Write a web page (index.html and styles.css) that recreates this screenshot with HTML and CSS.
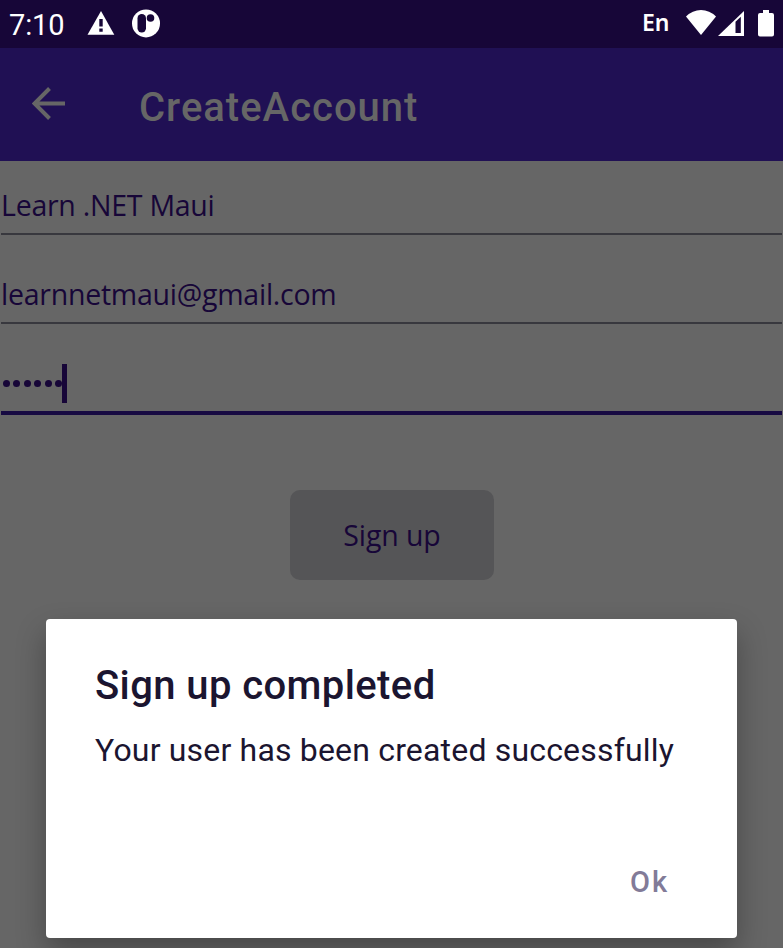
FILE: index.html
```html
<!DOCTYPE html>
<html lang="en">
<head>
<meta charset="utf-8">
<title>CreateAccount</title>
<link rel="stylesheet" href="styles.css">
</head>
<body>
<div class="screen">
  <div class="status">
    <span class="clock">7:10</span>
    <svg class="warn" width="28" height="24" viewBox="0 0 28 24"><path fill="#fff" d="M14 0 27.3 23.7H.5z"/><path fill="#170638" d="M12.3 8h3.4v7.4h-3.4zM12.3 17.6h3.4v3.2h-3.4z"/></svg>
    <svg class="app" width="28" height="29" viewBox="0 0 28 29"><circle cx="14" cy="14.4" r="14" fill="#fff"/><rect x="5.500" y="5" width="8.500" height="18.500" rx="4.200" fill="#170638"/><circle cx="18.500" cy="9" r="3.800" fill="#170638"/></svg>
    <span class="lang">En</span>
    <svg class="wifi" width="30" height="25" viewBox="0 0 30 25"><path fill="#fff" d="M15 25 0 6.500Q6.500 0 15 0t15 6.500z"/></svg>
    <svg class="signal" width="26" height="25" viewBox="0 0 26 25"><path fill="#fff" d="M26 0v25H0z"/><path fill="#170638" d="M17.500 10.800 22.800 5.700V22h-5.300z"/></svg>
    <svg class="battery" width="16" height="27" viewBox="0 0 16 27"><path fill="#fff" d="M5 0h6v3h3q2 0 2 2v19.500q0 2-2 2H2q-2 0-2-2V5q0-2 2-2h3z"/></svg>
  </div>
  <header class="bar">
    <svg width="34" height="33" viewBox="0 0 34 33"><path fill="none" stroke="#666" stroke-width="4" d="M33 16.500H3M17.500 1.500 2.500 16.500l15 15"/></svg>
    <h1>CreateAccount</h1>
  </header>
  <main class="form">
    <div class="field">Learn .NET Maui</div>
    <div class="field">learnnetmaui@gmail.com</div>
    <div class="field password"><i></i><i></i><i></i><i></i><i></i><i></i><b class="caret"></b></div>
    <button class="signup">Sign up</button>
  </main>
  <section class="dialog">
    <h2>Sign up completed</h2>
    <p>Your user has been created successfully</p>
    <button class="ok">Ok</button>
  </section>
</div>
</body>
</html>
```
FILE: styles.css
```css
* { box-sizing: border-box; }
body { margin: 0; background: #666; }
.screen { width: 783px; height: 948px; overflow: hidden; background: #666; font-family: Roboto, sans-serif; }
svg { display: block; flex: none; }
.status { display: flex; align-items: flex-start; height: 48px; padding-left: 9px; background: #170638; color: #fff; }
.clock { width: 78px; font-size: 29px; line-height: 34px; margin-top: 8px; letter-spacing: -.1px; }
.warn { margin-top: 11px; }
.app { margin: 9px 0 0 17px; }
.lang { width: 44px; margin: 6px 0 0 482px; font: 600 23px/32px "Noto Sans", sans-serif; letter-spacing: -.2px; }
.wifi { margin-top: 10px; }
.signal { margin: 11px 0 0 2px; }
.battery { margin: 10px 0 0 14px; }
.bar { display: flex; align-items: flex-start; height: 113px; padding: 39px 0 0 32px; background: #201054; color: #666; }
h1 { margin: -3px 0 0 73px; font-weight: 500; font-size: 40px; line-height: 48px; letter-spacing: 1px; }
.form { display: flex; flex-direction: column; height: 458px; }
.field { height: 89px; margin: 0 1px; padding-top: 24px; font: 28.500px/40px "Open Sans", sans-serif; letter-spacing: -.25px; color: #170638; white-space: nowrap; background: linear-gradient(#38383e, #38383e) 0 72px / 100% 2px no-repeat; }
.password { display: flex; align-items: center; gap: 3.400px; height: 76px; padding: 19px 0 6px 2px; background: linear-gradient(#170a42, #170a42) 0 72px / 100% 4px no-repeat; }
.password i { width: 7px; height: 7px; border-radius: 50%; background: #170638; }
.caret { width: 5px; height: 39px; margin-left: -3px; background: #170638; }
.signup { align-self: center; width: 204px; height: 90px; margin-top: 75px; padding: 0 0 0 1px; border: 0; border-radius: 10px; background: #555557; color: #170638; font: 28.500px/40px "Open Sans", sans-serif; letter-spacing: -.1px; }
.dialog { display: flex; flex-direction: column; width: 691px; height: 319px; margin-left: 46px; padding: 43px 49px; border-radius: 4px; background: #fff; color: #1b1530; box-shadow: 0 14px 30px rgba(0, 0, 0, .3); }
h2 { margin: 0; font-weight: 500; font-size: 40px; line-height: 48px; letter-spacing: .4px; }
p { margin: 20px 0 0; font-size: 32px; line-height: 40px; letter-spacing: .18px; white-space: nowrap; }
.ok { align-self: flex-end; width: 58px; margin: 92px 0 0; padding: 0; border: 0; background: none; color: #827b98; font: 500 29px/40px Roboto, sans-serif; letter-spacing: 2px; text-align: left; }
```
